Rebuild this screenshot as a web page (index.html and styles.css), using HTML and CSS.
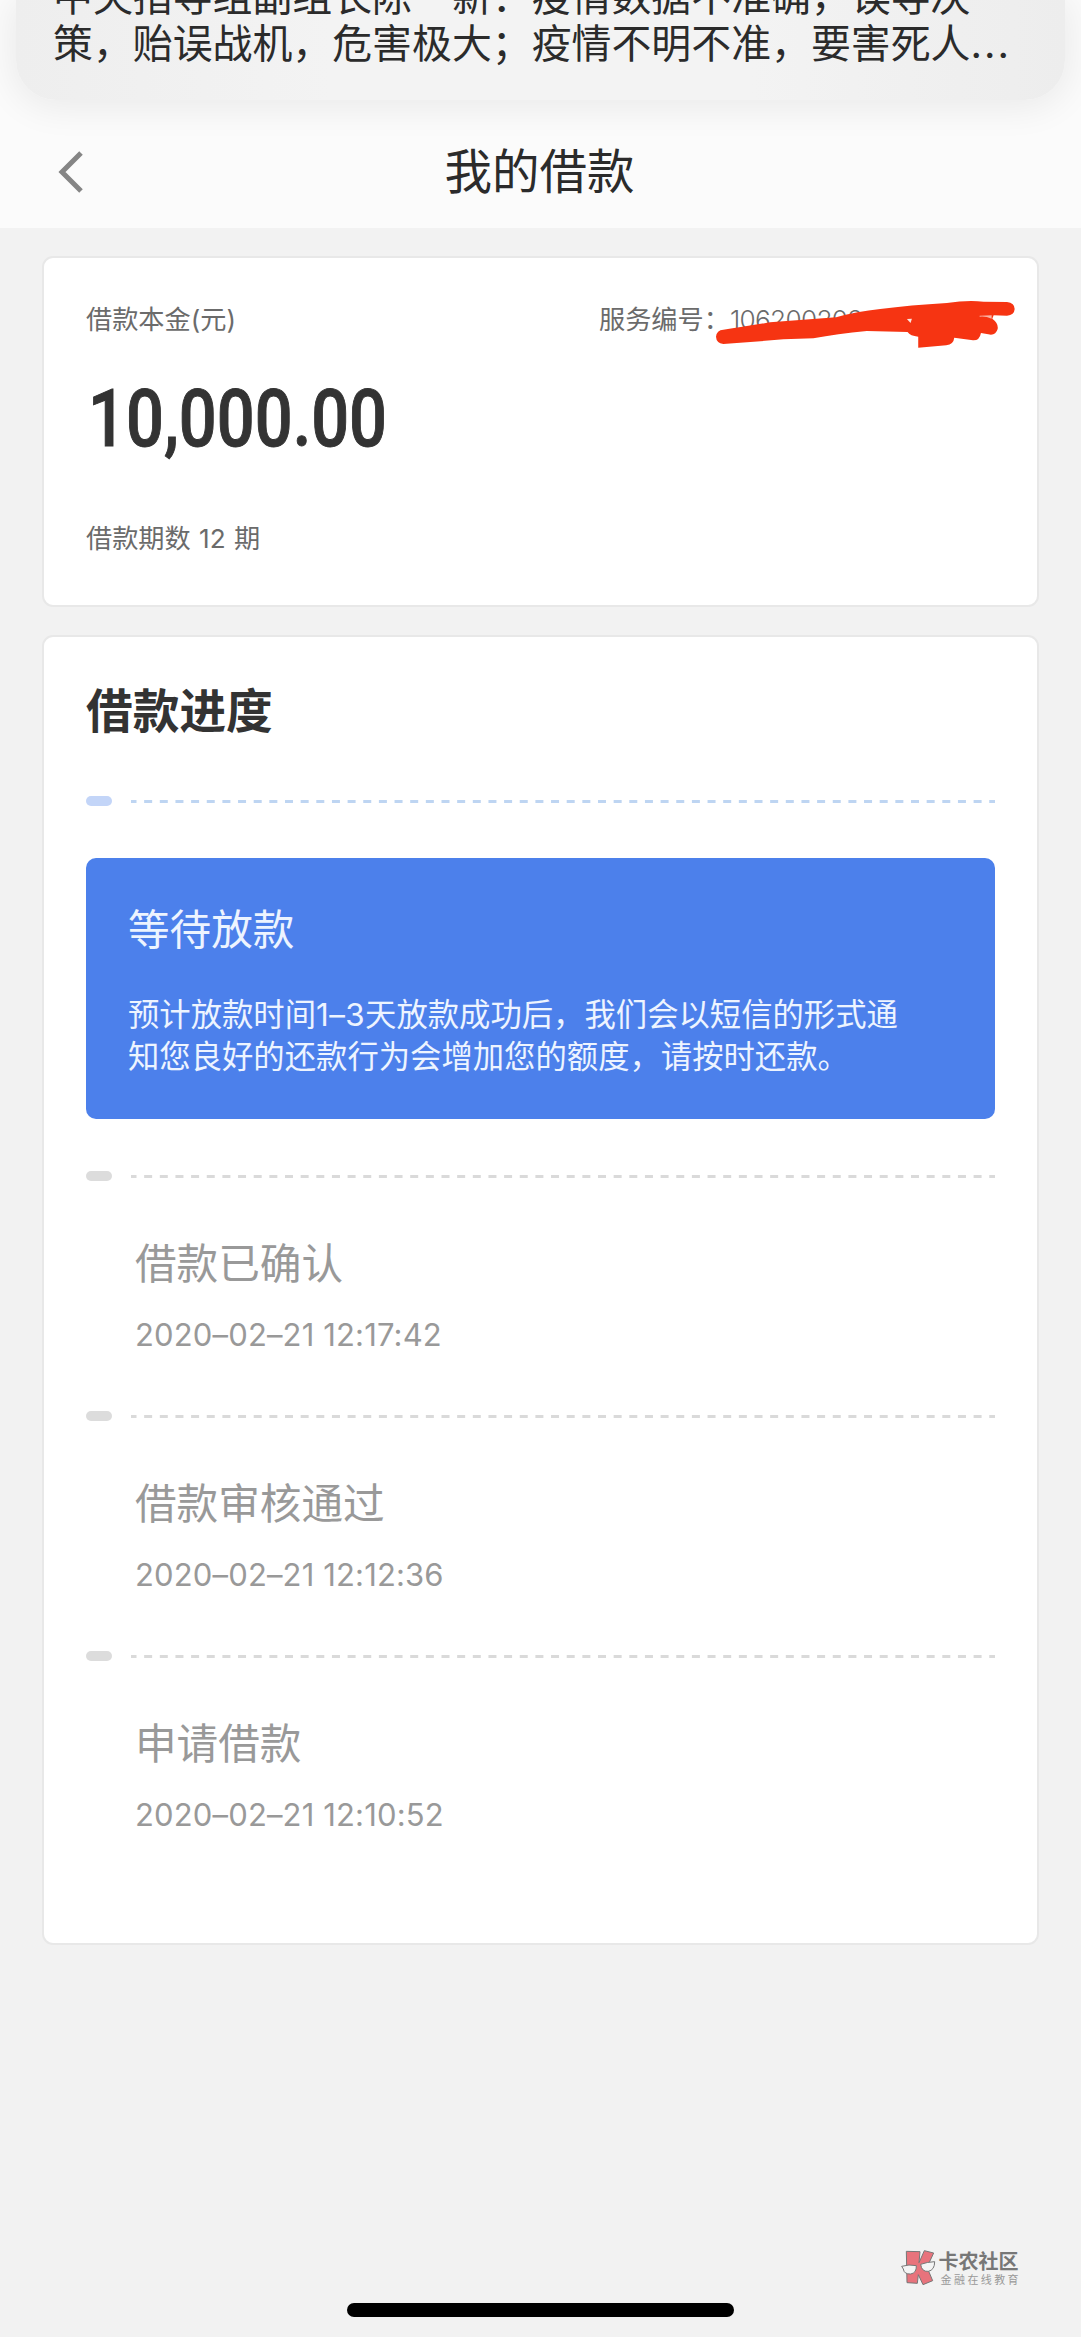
FILE: index.html
```html
<!DOCTYPE html>
<html lang="zh-CN">
<head>
	<meta charset="utf-8">
	<title>我的借款</title>
	<link rel="stylesheet" href="styles.css">
</head>
<body>
	<div class="notice">
		<p>中央指导组副组长陈一新：疫情数据不准确，误导决<br>策，贻误战机，危害极大；疫情不明不准，要害死人<span class="dots">...</span></p>
	</div>

	<header class="navbar">
		<svg class="back" width="26" height="42" viewBox="0 0 26 42"><path d="M24 2 L5 21 L24 40" fill="none" stroke="#858585" stroke-width="5"/></svg>
		<h1>我的借款</h1>
	</header>

	<main class="content">
		<section class="card loan">
			<div class="loan-top">
				<span>借款本金(元)</span>
				<div class="serial">服务编号：<span class="serial-no">106200202</span>
					<svg class="scribble" viewBox="48 28 896 144" preserveAspectRatio="none">
						<path fill="#f63412" d="M48 138 Q50 118 70 117 Q130 108 210 95 L408 80 Q470 62 540 55 Q630 43 740 37 Q800 28 850 33 L920 34 Q943 37 943 55 Q942 73 920 75 L880 74 L876 84 Q895 98 892 115 Q886 136 864 131 L842 127 Q838 150 818 149 L762 141 Q760 161 738 164 L654 171 L654 138 Q630 136 622 124 L500 121 Q410 130 340 143 L250 146 L100 158 L70 160 Q49 157 48 138 Z"/>
						<path fill="#fbe6e0" d="M620 85 L635 84 L631 97 Z"/>
						<path fill="#fbb3a5" d="M838 75 L874 74 L874 84 Q856 76 838 78 Z"/>
					</svg>
				</div>
			</div>
			<div class="amount">10,000.00</div>
			<div class="periods">借款期数 12 期</div>
		</section>

		<section class="card progress">
			<h2>借款进度</h2>

			<div class="rule active"><i></i><svg width="864" height="3"><line x1="0" y1="1.5" x2="864" y2="1.5" stroke-dasharray="8 7.65" stroke-dashoffset="2.5"/></svg></div>
			<div class="current">
				<h3>等待放款</h3>
				<p>预计放款时间<span class="num">1–3</span>天放款成功后，我们会以短信的形式通<br>知您良好的还款行为会增加您的额度，请按时还款。</p>
			</div>

			<div class="rule"><i></i><svg width="864" height="3"><line x1="0" y1="1.5" x2="864" y2="1.5" stroke-dasharray="8 7.65" stroke-dashoffset="2.5"/></svg></div>
			<div class="step">
				<h3>借款已确认</h3>
				<time>2020–02–21 12:17:42</time>
			</div>

			<div class="rule"><i></i><svg width="864" height="3"><line x1="0" y1="1.5" x2="864" y2="1.5" stroke-dasharray="8 7.65" stroke-dashoffset="2.5"/></svg></div>
			<div class="step">
				<h3>借款审核通过</h3>
				<time>2020–02–21 12:12:36</time>
			</div>

			<div class="rule"><i></i><svg width="864" height="3"><line x1="0" y1="1.5" x2="864" y2="1.5" stroke-dasharray="8 7.65" stroke-dashoffset="2.5"/></svg></div>
			<div class="step">
				<h3>申请借款</h3>
				<time>2020–02–21 12:10:52</time>
			</div>
		</section>
	</main>

	<footer class="bottom">
		<div class="brand">
			<svg width="35" height="36" viewBox="0 0 105 108">
				<path d="M16 4 L57 5 L54 38 L70 2 L98 9 L78 52 L95 92 L66 104 L52 74 L49 100 L18 98 Z" fill="#e8737c" stroke="#777" stroke-width="3" stroke-linejoin="round"/>
				<g fill="#f4f4f4" stroke="#777" stroke-width="3">
					<path d="M2 49 Q24 42 46 47 Q47 69 29 72 Q9 73 7 57 Z"/>
					<path d="M59 43 Q78 36 101 35 Q101 60 82 64 Q62 66 59 43 Z"/>
				</g>
			</svg>
			<div>
				<div class="brand-name">卡农社区</div>
				<div class="brand-sub">金融在线教育</div>
			</div>
		</div>
		<div class="home-bar"></div>
	</footer>
</body>
</html>
```

FILE: styles.css
```css
* { box-sizing: border-box; margin: 0; padding: 0; }
body {
	width: 1081px;
	height: 2337px;
	overflow: hidden;
	position: relative;
	background: #f2f2f2;
	color: #333;
	font-family: Inter, "Noto Sans CJK SC", sans-serif;
}
h1, h2, h3 { font-weight: 400; }
svg { display: block; }

/* system notification sliding over the page */
.notice {
	position: absolute;
	top: 0;
	left: 16px;
	width: 1049px;
	height: 100px;
	border-radius: 0 0 40px 40px;
	background: linear-gradient(90deg, #eee, #f3f3f3 30%, #f3f3f3 70%, #ededed);
	box-shadow: 0 4px 36px 4px rgba(0,0,0,.07);
}
.notice p {
	margin-top: -27px;
	padding-left: 37px;
	font-size: 39.9px;
	line-height: 47px;
	color: #2b2b2b;
	white-space: nowrap;
}
.dots { letter-spacing: 2px; }

.navbar {
	display: grid;
	grid-template-columns: 1fr auto 1fr;
	align-items: center;
	height: 228px;
	padding: 116px 59px 0 57px;
	background: #fbfbfb;
}
.navbar h1 { font-size: 47.5px; line-height: 60px; color: #2b2b2b; }

.content { padding: 28px 42px 0; }
.card {
	background: #fff;
	border: 2px solid #e8e8e8;
	border-radius: 11px;
}
.loan { height: 351px; padding: 42px 42px 0; color: #6b6b6b; font-size: 26.2px; line-height: 40px; }
.loan-top { display: flex; justify-content: space-between; }
.serial { position: relative; width: 396px; white-space: nowrap; }
.serial-no { letter-spacing: -.7px; font-weight: 300; }
.scribble { position: absolute; left: 117px; top: 0; width: 299px; height: 48px; }
.amount {
	margin: 34px 0 0 2px;
	font: 500 79px/90px Roboto, sans-serif;
	color: #333;
	-webkit-text-stroke: 1px #333;
	transform: scaleX(.845);
	transform-origin: 0 0;
}
.periods { margin-top: 55px; word-spacing: 1px; }

.progress { height: 1310px; margin-top: 28px; padding: 40px 42px 0; }
.progress h2 { font-size: 46.7px; line-height: 68px; font-weight: 700; height: 119px; }
.rule { display: flex; align-items: center; justify-content: space-between; height: 10px; }
.rule i { width: 26px; height: 10px; border-radius: 5px; background: #dcdcdc; }
.rule line { stroke: #dadada; stroke-width: 3; }
.active i { background: #c3d5f8; }
.active line { stroke: #bed5f2; }
.current {
	height: 261px;
	margin: 52px 0;
	padding: 42px 42px 0;
	border-radius: 10px;
	background: #4c80eb;
	color: #edf4ff;
}
.current h3 { font-size: 41.6px; line-height: 60px; }
.current p { margin-top: 34px; font-size: 31.35px; line-height: 42px; white-space: nowrap; }
.num { letter-spacing: .4px; }
.step { height: 230px; padding: 53px 0 0 49px; color: #999; }
.step h3 { font-size: 41.6px; line-height: 60px; }
.step time { display: block; margin-top: 21px; font-size: 31px; line-height: 40px; letter-spacing: .15px; }

.bottom { display: flex; flex-direction: column; align-items: center; padding-top: 305px; }
.brand { display: flex; align-self: flex-end; gap: 3px; margin-right: 60px; height: 53px; color: #777; }
.brand-name { font-size: 20px; line-height: 24px; font-weight: 700; }
.brand-sub { font-size: 11px; line-height: 13px; letter-spacing: 2.4px; color: #999; margin-left: 2px; }
.home-bar { width: 387px; height: 14px; border-radius: 7px; background: #000; }
```
